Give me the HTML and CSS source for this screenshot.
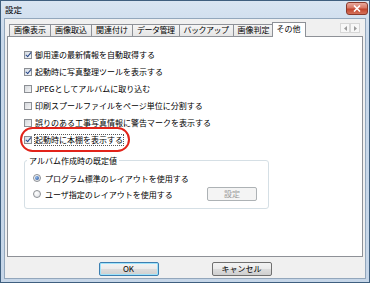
FILE: index.html
```html
<!DOCTYPE html>
<html lang="ja">
<head>
  <meta charset="UTF-8">
  <title>設定</title>
  <link rel="stylesheet" href="styles.css">
</head>
<body>
  <div class="window">
    <div class="titlebar">
      <span class="title">設定</span>
      <div class="close">
        <svg width="8" height="7" viewBox="0 0 8 7"><path d="M1 0.5 L7 6.5 M7 0.5 L1 6.5" stroke="#fff" stroke-width="1.6"/></svg>
      </div>
    </div>

    <div class="client">
      <div class="tabs">
        <div class="tab">画像表示</div>
        <div class="tab">画像取込</div>
        <div class="tab">関連付け</div>
        <div class="tab kana">データ管理</div>
        <div class="tab kana">バックアップ</div>
        <div class="tab">画像判定</div>
        <div class="tab active">その他</div>
        <div class="tab-scroll">
          <span class="arrow"><svg width="3" height="5" viewBox="0 0 3 5"><path d="M3 0 L0 2.5 L3 5 Z" fill="#9a9a9a"/></svg></span>
          <span class="arrow"><svg width="3" height="5" viewBox="0 0 3 5"><path d="M0 0 L3 2.5 L0 5 Z" fill="#9a9a9a"/></svg></span>
        </div>
      </div>

      <div class="panel">
        <div class="check on"><span class="box"></span>御用達の最新情報を自動取得する</div>
        <div class="check on"><span class="box"></span>起動時に写真整理ツールを表示する</div>
        <div class="check"><span class="box"></span>JPEGとしてアルバムに取り込む</div>
        <div class="check"><span class="box"></span>印刷スプールファイルをページ単位に分割する</div>
        <div class="check"><span class="box"></span>誤りのある工事写真情報に警告マークを表示する</div>
        <div class="check on marked"><span class="box"></span><span class="focus">起動時に本棚を表示する</span><span class="ring"></span></div>

        <fieldset class="group">
          <legend>アルバム作成時の既定値</legend>
          <div class="radio on"><span class="dot"></span>プログラム標準のレイアウトを使用する</div>
          <div class="radio"><span class="dot"></span>ユーザ指定のレイアウトを使用する<button class="btn small" disabled>設定</button></div>
        </fieldset>
      </div>

      <div class="buttons">
        <button class="btn default">OK</button>
        <button class="btn">キャンセル</button>
      </div>
    </div>
  </div>
</body>
</html>
```

FILE: styles.css
```css
* {
  box-sizing: border-box;
}
body {
  margin: 0;
  background: #ffffff;
  font-family: "Noto Sans CJK JP", "Liberation Sans", sans-serif;
  font-size: 8px;
  color: #000000;
}
.window {
  width: 370px;
  height: 283px;
  border: 1px solid #3f5f7f;
  background: linear-gradient(#d9e5f2, #c8d8ea 40px, #c6d6e8);
  display: flex;
  flex-direction: column;
}
.titlebar {
  height: 17px;
  display: flex;
  padding-left: 4px;
}
.title {
  flex: 1;
  font-size: 8.5px;
  line-height: 17px;
}
.close {
  width: 22px;
  height: 13px;
  margin: 1px 1px 0 0;
  border: 1px solid #8a3a2c;
  border-radius: 3px;
  background: linear-gradient(#e9a99c, #d87764 45%, #c2442c 55%, #d4715a);
  display: flex;
  align-items: center;
  justify-content: center;
}
.client {
  flex: 1;
  margin: 0 3px 3px;
  border: 1px solid #93a7bc;
  background: #f0f0f0;
  padding-top: 3px;
  display: flex;
  flex-direction: column;
}
.tabs {
  height: 14px;
  display: flex;
  align-items: flex-end;
  padding-left: 4px;
}
.tab {
  height: 12px;
  padding: 0 4px;
  margin-right: -1px;
  border: 1px solid #8e9197;
  border-bottom: none;
  background: linear-gradient(#f5f5f5, #e6e6e6);
  line-height: 10px;
  white-space: nowrap;
}
.tab.kana {
  letter-spacing: -0.5px;
}
.tab.active {
  position: relative;
  z-index: 1;
  height: 15px;
  margin: 0 -1px -1px -2px;
  padding: 0 4px;
  background: #ffffff;
  line-height: 12px;
}
.tab-scroll {
  align-self: flex-start;
  margin: 1px 5px 0 auto;
  display: flex;
}
.arrow {
  width: 10px;
  height: 10px;
  border: 1px solid #d6d6d6;
  background: #f7f7f7;
  display: flex;
  align-items: center;
  justify-content: center;
}
.panel {
  height: 221px;
  margin: 0 2px;
  border: 1px solid #8e9197;
  background: #ffffff;
  padding: 9px 0 0 16px;
}
.check {
  height: 17px;
  display: flex;
  align-items: center;
  white-space: nowrap;
}
.box {
  width: 8px;
  height: 8px;
  margin-right: 3px;
  border: 1px solid #8c8f94;
  background: linear-gradient(135deg, #d5d8dc, #f6f6f7);
}
.check.on .box {
  background: linear-gradient(135deg, #d5dbe3, #f4f6f8);
  position: relative;
}
.check.on .box::after {
  content: "";
  position: absolute;
  left: 2px;
  top: -1px;
  width: 2px;
  height: 5px;
  border: solid #2b4a8a;
  border-width: 0 1.5px 1.5px 0;
  transform: rotate(40deg);
}
.marked {
  position: relative;
}
.focus {
  outline: 1px dotted #555;
  line-height: 10px;
}
.ring {
  position: absolute;
  left: -4px;
  top: -4px;
  width: 110px;
  height: 25px;
  border: 2.5px solid #e2231a;
  border-radius: 13px;
}
.group {
  width: 245px;
  margin: 7px 0 0 0;
  padding: 0 11px 6px 8px;
  border: 1px solid #d5dfe5;
  border-radius: 3px;
}
.group legend {
  margin-left: -6px;
  padding: 0 2px;
  line-height: 11px;
}
.radio {
  height: 16px;
  display: flex;
  align-items: center;
  white-space: nowrap;
}
.radio.on {
  margin-top: 4px;
}
.dot {
  width: 8px;
  height: 8px;
  margin-right: 4px;
  border: 1px solid #8c8f94;
  border-radius: 50%;
  background: radial-gradient(circle at 35% 35%, #ffffff, #dcdfe3);
  display: flex;
  align-items: center;
  justify-content: center;
}
.radio.on .dot::after {
  content: "";
  width: 4px;
  height: 4px;
  border-radius: 50%;
  background: radial-gradient(circle at 35% 35%, #8fb6e8, #1f4f9a);
}
.btn {
  font-family: inherit;
  font-size: 8px;
  color: #000000;
  width: 60px;
  height: 14px;
  padding: 0;
  border: 1px solid #707070;
  border-radius: 2px;
  background: linear-gradient(#f3f3f3, #ebebeb 50%, #dddddd 50%, #cfcfcf);
  line-height: 12px;
}
.btn.default {
  border-color: #3c7fb1;
  box-shadow: inset 0 0 0 1px #9fe3fb;
}
.btn.small {
  width: 50px;
  height: 14px;
  margin-left: auto;
}
.btn:disabled {
  color: #9a9a9a;
  border-color: #adb2b5;
  background: #f4f4f4;
}
.buttons {
  margin-top: 5px;
  display: flex;
  justify-content: center;
  gap: 53px;
}
```
